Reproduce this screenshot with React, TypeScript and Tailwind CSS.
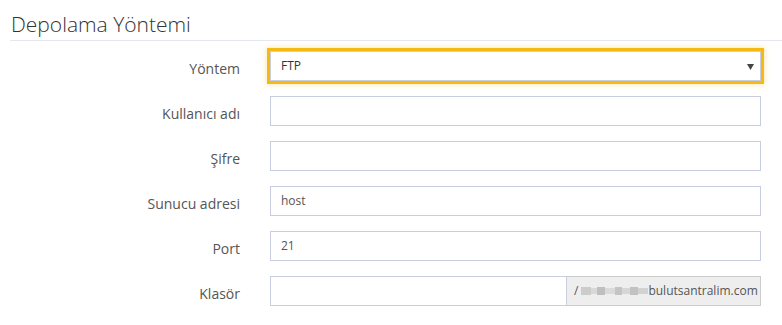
import React from "react";

const font = { fontFamily: '"Open Sans", "Noto Sans", sans-serif' };

function Row({ label, children }: { label: string; children: React.ReactNode }) {
  return (
    <div className="flex h-[30px] items-center">
      <div className="w-[240px] shrink-0 pt-[4px] text-right text-[14px] text-[#555]">{label}</div>
      <div className="ml-[30px] flex h-full w-[491px]">{children}</div>
    </div>
  );
}

function Input({ value }: { value?: string }) {
  return (
    <div className="flex h-full flex-1 items-center border border-[#c8cde0] bg-white pl-[10px] text-[12px] text-[#555]">
      {value}
    </div>
  );
}

export default function App() {
  return (
    <div className="min-h-[325px] w-[782px] bg-white" style={font}>
      <div className="ml-[10px] border-b border-[#e4e8ee] pb-[1px] pl-[1px] pt-[9px] text-[21px] font-light leading-[30px] text-[#333]">
        Depolama Yöntemi
      </div>
      <div className="flex flex-col gap-[15px] pt-[10px]">
        <Row label="Yöntem">
          <div className="relative flex h-full flex-1 items-center border border-[#c8cde0] bg-white pl-[10px] text-[12px] text-[#333] shadow-[0_0_0_3px_#f5b914,0_0_5px_4px_rgba(245,185,20,0.3)]">
            FTP
            <svg className="absolute right-[6px] top-[12px]" width="7" height="6" viewBox="0 0 7 6">
              <path d="M0 0 L7 0 L3.5 6 Z" fill="#444" />
            </svg>
          </div>
        </Row>
        <Row label="Kullanıcı adı">
          <Input />
        </Row>
        <Row label="Şifre">
          <Input />
        </Row>
        <Row label="Sunucu adresi">
          <Input value="host" />
        </Row>
        <Row label="Port">
          <Input value="21" />
        </Row>
        <Row label="Klasör">
          <Input />
          <div className="flex h-full w-[194px] items-center border border-l-0 border-[#ccc] bg-[#eee] pl-[7px] text-[12px] text-[#555]">
            <span>/</span>
            <span className="ml-[3px] flex h-[12px] w-[67px] items-center">
              <span className="h-[8px] w-[10px] bg-[#ccc]" />
              <span className="h-[6px] w-[6px] bg-[#d8d8d8]" />
              <span className="h-[8px] w-[8px] bg-[#bfbfbf]" />
              <span className="h-[6px] w-[10px] bg-[#dadada]" />
              <span className="h-[8px] w-[7px] bg-[#c4c4c4]" />
              <span className="h-[6px] w-[8px] bg-[#d6d6d6]" />
              <span className="h-[8px] w-[8px] bg-[#c2c2c2]" />
              <span className="h-[6px] w-[10px] bg-[#d2d2d2]" />
            </span>
            <span>bulutsantralim.com</span>
          </div>
        </Row>
      </div>
    </div>
  );
}
